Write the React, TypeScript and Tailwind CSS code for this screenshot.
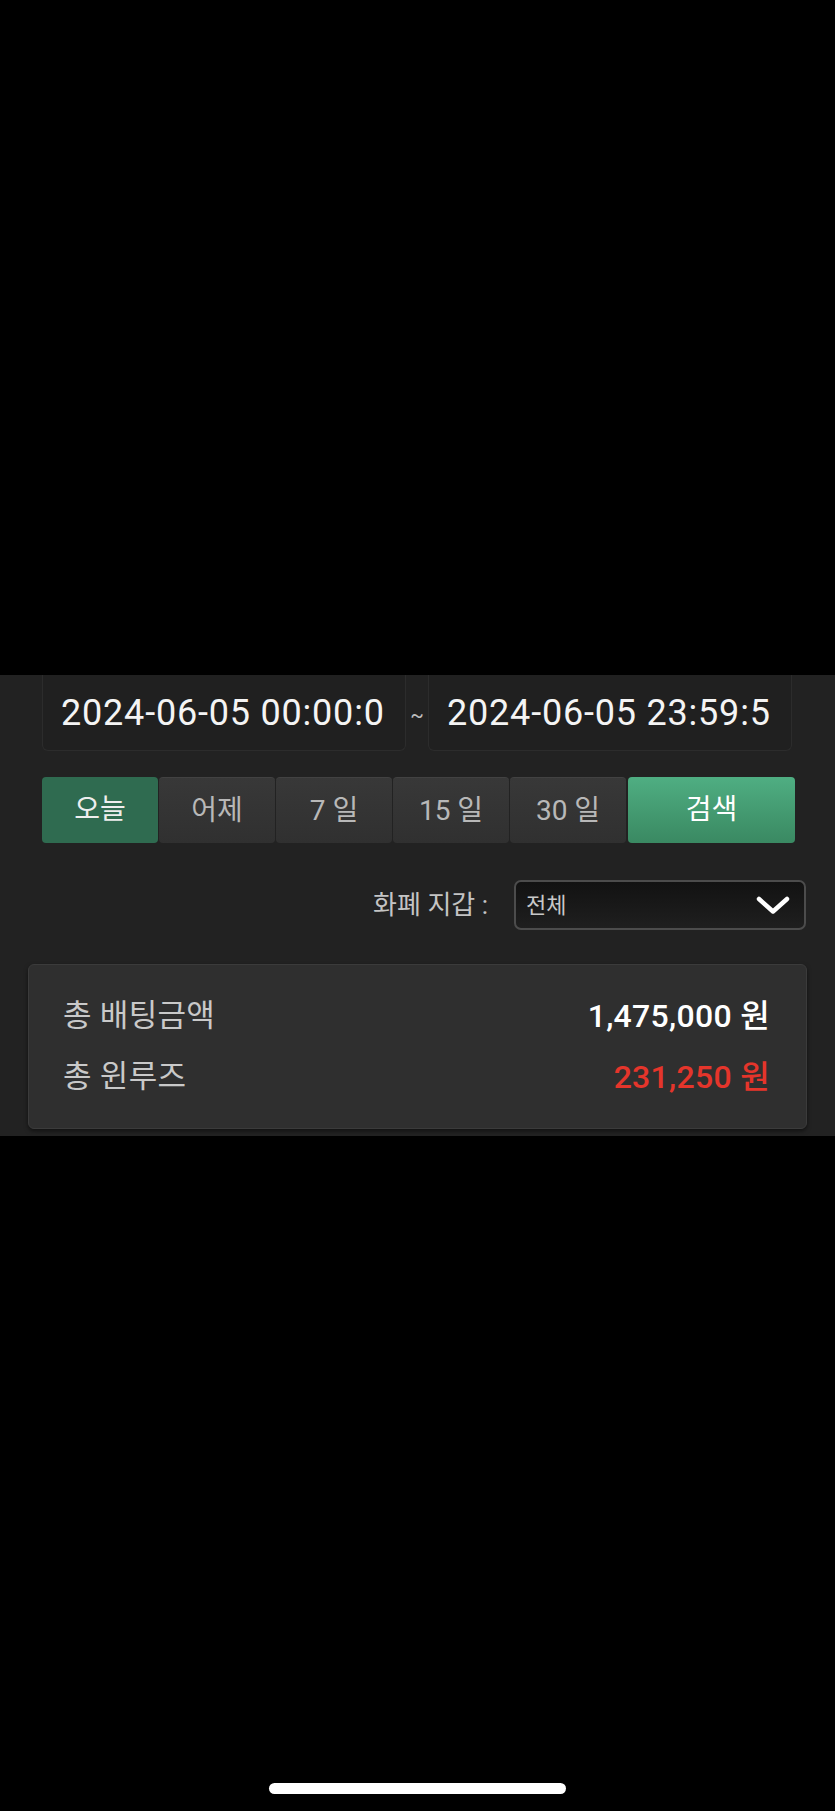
import React from "react";

const periodButtons = ["어제", "7 일", "15 일", "30 일"];

const ChevronDown: React.FC = () => (
  <svg width="34" height="19" viewBox="0 0 34 19" fill="none">
    <polyline
      points="3,3 17,15.5 31,3"
      stroke="#ffffff"
      strokeWidth="4.5"
      strokeLinecap="round"
      strokeLinejoin="round"
    />
  </svg>
);

const DateBox: React.FC<{ value: string }> = ({ value }) => (
  <div className="w-[364px] h-[76px] flex items-center pl-[18px] overflow-hidden whitespace-nowrap bg-[#202020] border border-t-0 border-[#2c2c2c] rounded-b-[6px] text-[36px] tracking-[0.8px] text-[#f4f4f4] leading-none">
    {value}
  </div>
);

const SummaryRow: React.FC<{ label: string; value: string; red?: boolean }> = ({
  label,
  value,
  red,
}) => (
  <div className="h-10 flex items-center justify-between">
    <span className="text-[31px] tracking-[0.3px] text-[#c9c9c9]">{label}</span>
    <span
      className={`text-[32px] font-medium tracking-[0.3px] ${
        red ? "text-[#e5352b]" : "text-white"
      }`}
    >
      {value}
    </span>
  </div>
);

export default function App() {
  return (
    <div className="w-full h-[1811px] bg-black flex flex-col font-['Roboto','Noto_Sans_CJK_KR',sans-serif]">
      <div className="h-[675px] shrink-0" />

      <div className="h-[461px] shrink-0 bg-[#222222] overflow-hidden">
        {/* date range */}
        <div className="flex items-center pl-[42px]">
          <DateBox value="2024-06-05 00:00:0" />
          <span className="w-[22px] text-center text-[20px] text-[#bdbdbd] pt-[4px]">~</span>
          <DateBox value="2024-06-05 23:59:5" />
        </div>

        {/* quick period buttons */}
        <div className="flex mt-[26px] pl-[42px] h-[66px]">
          <button className="w-[116px] h-full rounded-[4px] bg-[#2f6b50] text-[28px] text-[#eeeeee]">
            오늘
          </button>
          {periodButtons.map((label) => (
            <button
              key={label}
              className="w-[116px] h-full ml-px rounded-[4px] bg-gradient-to-b from-[#383838] to-[#303030] border-t border-[#424242] text-[28px] text-[#b8b8b8]"
            >
              {label}
            </button>
          ))}
          <button className="w-[167px] h-full ml-[2px] rounded-[4px] bg-gradient-to-b from-[#4fae82] to-[#3a8962] text-[28px] text-white">
            검색
          </button>
        </div>

        {/* wallet select */}
        <div className="flex items-center justify-end mt-[37px] pr-[29px]">
          <span className="text-[26px] text-[#c4c4c4] mr-[26px]">화폐 지갑&nbsp;:</span>
          <div className="w-[292px] h-[50px] flex items-center justify-between pl-[10px] pr-[14px] rounded-[7px] border-2 border-[#4c4c4c] bg-gradient-to-b from-[#121212] to-[#1f1f1f]">
            <span className="text-[22px] text-[#c8c8c8]">전체</span>
            <ChevronDown />
          </div>
        </div>

        {/* totals */}
        <div className="mt-[34px] mx-[28px] rounded-[6px] border border-[#3b3b3b] bg-[#2f2f2f] shadow-[0_2px_4px_rgba(0,0,0,0.5)] pl-[34px] pr-[36px] py-[31px] flex flex-col gap-[21px]">
          <SummaryRow label="총 배팅금액" value="1,475,000 원" />
          <SummaryRow label="총 윈루즈" value="231,250 원" red />
        </div>
      </div>

      <div className="flex-1 flex items-end justify-center pb-[17px]">
        <div className="w-[297px] h-[11px] rounded-full bg-white" />
      </div>
    </div>
  );
}
